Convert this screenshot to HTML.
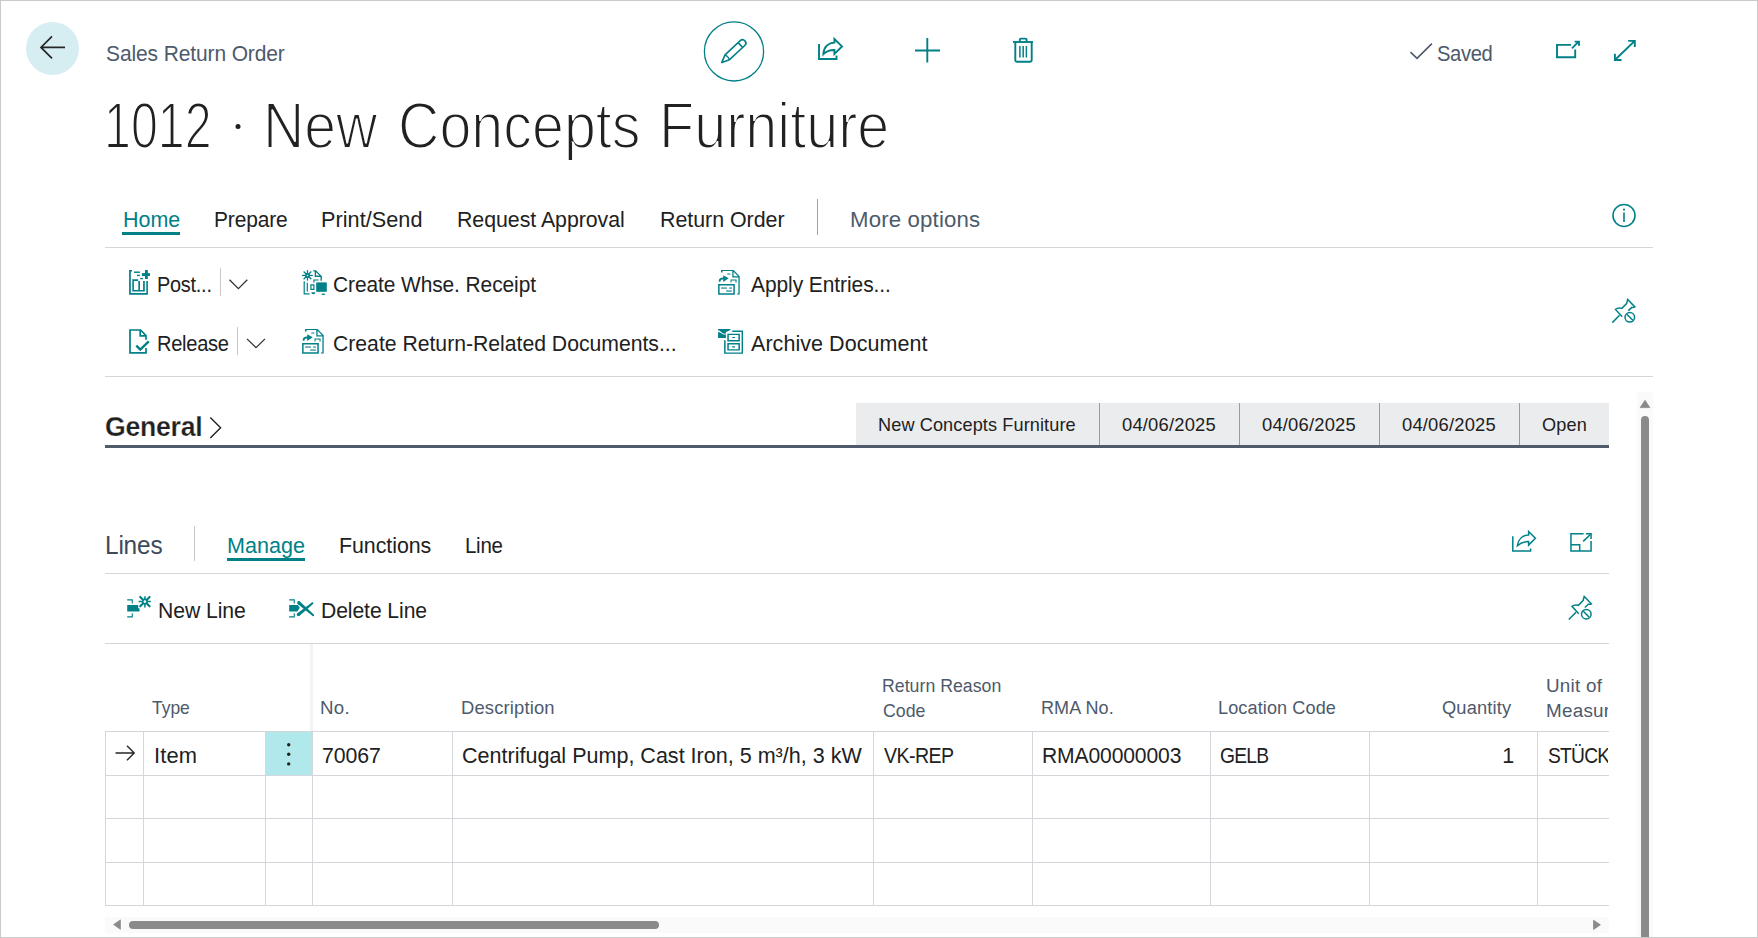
<!DOCTYPE html>
<html><head><meta charset="utf-8"><title>Sales Return Order</title>
<style>
html,body{margin:0;padding:0;background:#fff;}
body{width:1758px;height:938px;overflow:hidden;position:relative;font-family:"Liberation Sans",sans-serif;}
.t{position:absolute;white-space:nowrap;line-height:1;font-family:"Liberation Sans",sans-serif;transform-origin:0 0;}
.clip{position:absolute;overflow:hidden;}
.light{-webkit-text-stroke:1.9px #fff;}
.semi{-webkit-text-stroke:0.25px #fff;}
svg{position:absolute;left:0;top:0;}
</style></head><body>
<svg width="1758" height="938" viewBox="0 0 1758 938">
<!-- back button -->
<circle cx="52.5" cy="48.5" r="26.5" fill="#d6eef1"/>
<g fill="none" stroke="#262626" stroke-width="1.7" stroke-linecap="butt" stroke-linejoin="miter">
<path d="M41,47.4 H65 M52,36.4 L41,47.4 L52,58.4"/>
</g>
<circle cx="238" cy="126.6" r="2.5" fill="#212121"/>
<!-- edit circle -->
<circle cx="734" cy="51.4" r="29.6" fill="none" stroke="#008087" stroke-width="1.3"/>
<g fill="none" stroke="#008087" stroke-width="1.6" stroke-linejoin="round">
<g transform="translate(721.8,62.4) rotate(-43)">
<path d="M0,0 L7.5,-3.3 H28.3 A3.3,3.3 0 0 1 28.3,3.3 H7.5 Z"/>
<path d="M7.5,-3.3 Q9,0 7.5,3.3"/>
<path d="M25.5,-3.3 V3.3"/>
</g>
</g>
<!-- top share -->
<g fill="none" stroke="#008087" stroke-width="1.9" stroke-linejoin="miter">
<path d="M819,44 V59 H836.5 V55.6"/>
<path d="M834.4,39 L842,46.4 L834.4,53.9 V50 C829.5,49.8 826,51.5 823.4,54.2 C823.6,47.3 828,42.9 834.4,42.6 Z"/>
</g>
<!-- plus -->
<path d="M915,50.5 H940 M927.3,38 V62.6" stroke="#008087" stroke-width="1.9" fill="none"/>
<!-- trash -->
<g fill="none" stroke="#008087" stroke-width="1.9">
<path d="M1013,42 H1033"/>
<path d="M1019.8,42 V39.8 Q1019.8,38.6 1021,38.6 H1025.4 Q1026.6,38.6 1026.6,39.8 V42"/>
<path d="M1015.3,42 V60.3 Q1015.3,61.8 1016.8,61.8 H1030.2 Q1031.7,61.8 1031.7,60.3 V42"/>
<path d="M1019.9,46 V57.6 M1023.2,46 V57.6 M1026.4,46 V57.6" stroke-width="1.5"/>
</g>
<!-- saved check -->
<path d="M1410.5,52.2 L1417,58.4 L1431.9,43.6" fill="none" stroke="#4d5a6b" stroke-width="1.6"/>
<!-- open in new window -->
<g fill="none" stroke="#008087" stroke-width="1.9">
<path d="M1571,44.9 H1557 V57.3 H1575.2 V49.6"/>
<path d="M1572,48.3 L1578.6,41.7 M1574.6,41.6 H1579 V45.8"/>
</g>
<!-- expand -->
<g fill="none" stroke="#008087" stroke-width="1.9">
<path d="M1614.9,60 L1635,40.6 M1614.9,53.8 V60 H1621.5 M1628.2,40.9 H1634.8 V47"/>
</g>
<!-- tabs underline / separators / lines -->
<rect x="122" y="232" width="58" height="3" fill="#008087"/>
<rect x="817" y="199" width="1" height="36" fill="#9aa3ae"/>
<rect x="105" y="247" width="1548" height="1" fill="#d3d6db"/>
<!-- info -->
<circle cx="1624" cy="215.5" r="11" fill="none" stroke="#008087" stroke-width="1.6"/>
<circle cx="1624" cy="209.6" r="1.05" fill="#008087"/>
<path d="M1624,212.6 V222" stroke="#008087" stroke-width="1.6"/>
<!-- action separators & chevrons -->
<rect x="220" y="268" width="1" height="28" fill="#c8c8c8"/>
<rect x="237" y="327" width="1" height="28" fill="#c8c8c8"/>
<path d="M229.5,279.8 L238.4,288.6 L247.3,279.8 M247,338.9 L256,347.7 L265,338.9" fill="none" stroke="#333" stroke-width="1.3"/>
<rect x="105" y="376" width="1548" height="1" fill="#d3d6db"/>

<!-- POST icon origin 126,266 -->
<g transform="translate(126,266)" fill="#008087">
<path d="M3.1,4 H6 V5.6 H4.8 V27 H20.3 V15 H21.9 V28.7 H3.1 Z"/>
<path d="M6.3,13.3 H12.2 V15 H7.9 V24 H12.3 V15 H14 V24 H17.1 V15 H18.8 V25.6 H6.3 Z"/>
<rect x="8" y="5.5" width="5.9" height="1.4"/>
<rect x="11" y="8.7" width="2.9" height="1.4"/>
<rect x="14.3" y="11.9" width="2.6" height="1.4"/>
<rect x="19" y="4" width="2.8" height="9"/>
<rect x="15.9" y="7.1" width="8.1" height="2.9"/>
</g>
<!-- RELEASE icon origin 126,326 -->
<g transform="translate(126,326)" fill="none" stroke="#008087" stroke-width="1.7">
<path d="M20,13.8 V9.6 L14.6,4 H4 V26.9 H20 V22"/>
<path d="M14.2,4 V9.8 H20"/>
<path d="M10.3,19.6 L14.3,23.6 L22.8,15.4" stroke-width="2.4"/>
</g>
<!-- CREATE WHSE icon origin 299,266 -->
<g transform="translate(299,266)" fill="#008087">
<rect x="3" y="8.8" width="10.8" height="1.3"/>
<rect x="7.8" y="4.1" width="1.3" height="10.6"/>
<path d="M4.6,5.5 L12.3,13.2 M12.3,5.5 L4.6,13.2" stroke="#008087" stroke-width="1.3"/>
<rect x="6.3" y="7.3" width="4.5" height="4.5"/>
<circle cx="8.5" cy="9.5" r="0.8" fill="#fff"/>
<path d="M14.2,4.2 H17 L22.9,10.2 V14.7 H21.5 V11 H15.7 V5.6 H14.2 Z M17,6.2 V9.6 H20.6 Z" fill-rule="evenodd"/>
<path d="M14.3,13.5 H19.6 V14.6 H15.5 V16.4 H14.3 Z"/>
<path d="M4.6,15.2 H5.8 V27.3 H10.6 V28.5 H4.6 Z"/>
<rect x="7.7" y="16.7" width="1.2" height="8.9"/>
<path d="M11.3,18.3 H15.5 V24 H11.3 Z M12.5,19.5 V22.8 H14.3 V19.5 Z" fill-rule="evenodd"/>
<rect x="17.2" y="16.4" width="10.6" height="9.4"/>
<path d="M12.3,26.2 H16.3 A2,2 0 0 1 12.3,26.2 Z"/>
<ellipse cx="24.4" cy="28.2" rx="2" ry="0.8"/>
</g>
<!-- CREATE RETURN icon origin 299,326 (doc icon) -->
<g transform="translate(299,326)" fill="#008087" id="docicon">
<path d="M6,3.1 H18.6 L24.7,9.2 V27.6 H22 V26.6 H23.4 V10.4 H17.3 V4.1 H7.5 V5.5 H6 Z M18.6,4.8 V9.2 H23 Z" fill-rule="evenodd"/>
<rect x="12.1" y="6.5" width="3.4" height="1.1" rx="0.5"/>
<path d="M3.7,14.8 C3.7,12 5,10.6 8.2,10.6 V8.2 L13.7,11.3 L8.2,15 V12.6 C6.3,12.6 5.4,13.2 5.4,14.8 Z"/>
<path d="M15.5,12.5 H21.6 V15.4 H20.5 V13.6 H16.5 V15.4 H15.5 Z"/>
<path d="M3.1,17.1 H19.8 V27.8 H3.1 Z M4.6,18.6 V26.3 H18.3 V18.6 Z" fill-rule="evenodd"/>
<rect x="6.1" y="20.5" width="5.8" height="1.1"/>
<rect x="14.2" y="20.5" width="2.7" height="1.1"/>
<rect x="11.1" y="23.5" width="5.8" height="1.1"/>
</g>
<!-- APPLY ENTRIES icon origin 715,267 -->
<g transform="translate(715,267)" fill="#008087">
<path d="M6,3.1 H18.6 L24.7,9.2 V27.6 H22 V26.6 H23.4 V10.4 H17.3 V4.1 H7.5 V5.5 H6 Z M18.6,4.8 V9.2 H23 Z" fill-rule="evenodd"/>
<rect x="12.1" y="6.5" width="3.4" height="1.1" rx="0.5"/>
<path d="M3.7,14.8 C3.7,12 5,10.6 8.2,10.6 V8.2 L13.7,11.3 L8.2,15 V12.6 C6.3,12.6 5.4,13.2 5.4,14.8 Z"/>
<path d="M15.5,12.5 H21.6 V15.4 H20.5 V13.6 H16.5 V15.4 H15.5 Z"/>
<path d="M3.1,17.1 H19.8 V27.8 H3.1 Z M4.6,18.6 V26.3 H18.3 V18.6 Z" fill-rule="evenodd"/>
<rect x="6.1" y="20.5" width="5.8" height="1.1"/>
<rect x="14.2" y="20.5" width="2.7" height="1.1"/>
<rect x="11.1" y="23.5" width="5.8" height="1.1"/>
</g>
<!-- ARCHIVE icon origin 714,326 -->
<g transform="translate(714,326)" fill="#008087">
<path d="M4.1,2.9 H16.7 L16.2,4.1 L13,5.8 H11.9 V12.1 H4.1 V6.1 L5.5,6.3 L9.5,8.6 H11.9 V7.2 L9.2,7.6 L5.2,4.6 H4.1 Z"/>
<path d="M18.3,4.6 H29 V27.8 H10.1 V14.3 H11.6 V26.5 H27.6 V5.9 H18.3 Z"/>
<path d="M13.3,7.8 H25.9 V15.4 H13.3 Z M14.8,9.1 V14.1 H24.4 V9.1 Z" fill-rule="evenodd"/>
<path d="M13.3,17.1 H25.9 V24.6 H13.3 Z M14.8,18.4 V23.3 H24.4 V18.4 Z" fill-rule="evenodd"/>
<rect x="18.1" y="10.9" width="3" height="1.1" rx="0.5"/>
<rect x="18.1" y="20.3" width="3" height="1.1" rx="0.5"/>
</g>
<!-- top pin origin 1607.5,295.1 -->
<g transform="translate(1607.5,295.1)" fill="none" stroke="#008087" stroke-width="1.5">
<path d="M4.8,27.5 L12,20.2"/>
<path d="M14.7,21.7 L8,14.3 C9.8,12.8 12,12.6 14.3,13.3 L19.1,8.5 L20.2,4.4 L27.4,11.8 C26.2,12.6 25.2,12.4 24.4,12.3 L20.8,15.5"/>
<circle cx="22.3" cy="22.2" r="4.8"/>
<path d="M19.3,19.2 L25.3,25.2"/>
</g>
<!-- General -->
<rect x="856" y="403" width="753" height="42" fill="#ebecee"/>
<rect x="1099" y="403" width="1" height="42" fill="#9b9b9b"/>
<rect x="1239" y="403" width="1" height="42" fill="#9b9b9b"/>
<rect x="1379" y="403" width="1" height="42" fill="#9b9b9b"/>
<rect x="1519" y="403" width="1" height="42" fill="#9b9b9b"/>
<rect x="105" y="445" width="1504" height="3" fill="#4f5b6b"/>
<path d="M210.3,417.5 L220.6,427.7 L210.3,437.9" fill="none" stroke="#212121" stroke-width="1.4"/>
<!-- v scrollbar -->
<rect x="1637" y="392" width="16" height="545" fill="#fafafa"/>
<path d="M1645,400.3 L1649.8,407.6 H1640.2 Z" fill="#8a8a8a" stroke="#8a8a8a" stroke-width="0.8" stroke-linejoin="round"/>
<rect x="1641" y="416" width="8" height="530" rx="4" fill="#8a8a8a"/>
<!-- Lines header -->
<rect x="194" y="526" width="1" height="35" fill="#c8c8c8"/>
<rect x="227" y="558" width="78" height="3" fill="#008087"/>
<rect x="105" y="573" width="1504" height="1" fill="#d3d6db"/>
<!-- lines share -->
<g fill="none" stroke="#008087" stroke-width="1.5">
<path d="M1512.8,536.2 V551 H1530.6 V548.5"/>
<path d="M1528.6,531.5 L1535.4,538.3 L1528.6,545.1 V541.6 C1523.5,541.4 1520.3,543 1517.4,545.6 C1518.2,539.3 1522.5,535.3 1528.6,535 Z"/>
</g>
<!-- lines expand -->
<g fill="none" stroke="#008087" stroke-width="1.5" transform="translate(1564,528)">
<path d="M19.6,5.85 H6.95 V22.95 H27.05 V13"/>
<path d="M21.8,5.85 H27.05 V11"/>
<path d="M19.2,13.4 L26.6,6.3"/>
<path d="M6.95,16.85 H15.7 V22.95"/>
</g>
<!-- new line icon origin 124,592 -->
<g transform="translate(124,592)" fill="#008087">
<path d="M3.2,7.2 H8.8 V11.5 H7.7 V8.6 H3.2 Z"/>
<path d="M3.2,13.1 H14.2 V16.3 H15.5 V19.5 H3.2 Z"/>
<path d="M7.7,21.3 H8.8 V25.6 H3.2 V24.2 H7.7 Z"/>
<g stroke="#008087" stroke-width="1.5" fill="none">
<path d="M14.6,9.6 H26.8 M20.9,4.2 V15.6"/>
<path d="M16.2,4.9 L25.6,14.3 M25.6,4.9 L16.2,14.3" stroke-width="2.1" stroke-linecap="round"/>
</g>
<circle cx="20.9" cy="9.6" r="3" fill="#008087"/>
<circle cx="20.9" cy="9.6" r="1.3" fill="#fff"/>
</g>
<!-- delete line icon origin 286,592 -->
<g transform="translate(286,592)" fill="#008087">
<path d="M3.2,7.2 H8.8 V11.5 H7.7 V8.6 H3.2 Z"/>
<path d="M3.2,13.1 H11.8 L13.8,15.8 L11.3,19.5 H3.2 Z"/>
<path d="M7.7,21.3 H8.8 V25.6 H3.2 V24.2 H7.7 Z"/>
<path d="M11.68,11.98 L26.61,23.98 L27.79,22.62 L13.92,9.42 Z"/><circle cx="12.8" cy="10.7" r="1.7"/><circle cx="27.2" cy="23.3" r="0.9"/>
<path d="M13.57,23.82 L27.07,11.9 L25.93,10.5 L11.43,21.18 Z"/><circle cx="12.5" cy="22.5" r="1.7"/><circle cx="26.5" cy="11.2" r="0.9"/>
</g>
<!-- lines pin origin 1564,592 -->
<g transform="translate(1564,592)" fill="none" stroke="#008087" stroke-width="1.5">
<path d="M4.8,27.5 L12,20.2"/>
<path d="M14.7,21.7 L8,14.3 C9.8,12.8 12,12.6 14.3,13.3 L19.1,8.5 L20.2,4.4 L27.4,11.8 C26.2,12.6 25.2,12.4 24.4,12.3 L20.8,15.5"/>
<circle cx="22.3" cy="22.2" r="4.8"/>
<path d="M19.3,19.2 L25.3,25.2"/>
</g>
<rect x="105" y="643" width="1504" height="1" fill="#d3d6db"/>
<!-- grid -->
<rect x="310" y="644" width="3" height="88" fill="#f3f3f3"/>
<rect x="266" y="732" width="46" height="43" fill="#b1e8eb"/>
<g fill="#d3d6db">
<rect x="105" y="731" width="1504" height="1"/>
<rect x="105" y="775" width="1504" height="1"/>
<rect x="105" y="818" width="1504" height="1"/>
<rect x="105" y="862" width="1504" height="1"/>
<rect x="105" y="905" width="1504" height="1"/>
<rect x="105" y="731" width="1" height="175"/>
<rect x="143" y="731" width="1" height="175"/>
<rect x="265" y="731" width="1" height="175"/>
<rect x="312" y="731" width="1" height="175"/>
<rect x="452" y="731" width="1" height="175"/>
<rect x="873" y="731" width="1" height="175"/>
<rect x="1032" y="731" width="1" height="175"/>
<rect x="1210" y="731" width="1" height="175"/>
<rect x="1369" y="731" width="1" height="175"/>
<rect x="1537" y="731" width="1" height="175"/>
</g>
<!-- row arrow -->
<path d="M115.5,753 H134 M127,745.8 L134.2,753 L127,760.2" fill="none" stroke="#262626" stroke-width="1.4"/>
<!-- dots -->
<circle cx="288.7" cy="744.8" r="1.7" fill="#212121"/>
<circle cx="288.7" cy="754.3" r="1.7" fill="#212121"/>
<circle cx="288.7" cy="763.9" r="1.7" fill="#212121"/>
<!-- h scrollbar -->
<rect x="105" y="917" width="1504" height="16" fill="#fafafa"/>
<path d="M113.6,924.6 L120.4,919.9 V929.3 Z" fill="#8a8a8a" stroke="#8a8a8a" stroke-width="0.8" stroke-linejoin="round"/>
<rect x="129" y="921" width="530" height="8" rx="4" fill="#8a8a8a"/>
<path d="M1600.4,924.85 L1593.5,920.2 V929.5 Z" fill="#8a8a8a" stroke="#8a8a8a" stroke-width="0.8" stroke-linejoin="round"/>
<rect x="0.5" y="0.5" width="1757" height="937" fill="none" stroke="#c9cbcb" stroke-width="1"/>
</svg>

<div class="t" style="left:106.30px;top:44.47px;font-size:21.53px;letter-spacing:-0.116px;color:#4d5a6b;transform:scaleX(0.9753);">Sales Return Order</div>
<div class="t" style="left:1437.30px;top:44.47px;font-size:21.53px;letter-spacing:-0.398px;color:#4d5a6b;transform:scaleX(0.9393);">Saved</div>
<div class="t light" style="left:104.40px;top:94.40px;font-size:64.5px;letter-spacing:0.000px;color:#212121;transform:scaleX(0.7495);">1012</div>
<div class="t light" style="left:262.67px;top:94.40px;font-size:64.5px;letter-spacing:0.000px;color:#212121;transform:scaleX(0.8863);">New</div>
<div class="t light" style="left:397.53px;top:94.40px;font-size:64.5px;letter-spacing:0.000px;color:#212121;transform:scaleX(0.8898);">Concepts</div>
<div class="t light" style="left:659.24px;top:94.40px;font-size:64.5px;letter-spacing:0.000px;color:#212121;transform:scaleX(0.8924);">Furniture</div>
<div class="t" style="left:122.50px;top:210.47px;font-size:21.53px;letter-spacing:-0.013px;color:#008087;transform:scaleX(0.9984);">Home</div>
<div class="t" style="left:213.83px;top:210.47px;font-size:21.53px;letter-spacing:-0.146px;color:#212121;transform:scaleX(0.9732);">Prepare</div>
<div class="t" style="left:321.09px;top:210.47px;font-size:21.53px;letter-spacing:0.033px;color:#212121;transform:scaleX(1.0071);">Print/Send</div>
<div class="t" style="left:456.51px;top:210.47px;font-size:21.53px;letter-spacing:-0.041px;color:#212121;transform:scaleX(0.9915);">Request Approval</div>
<div class="t" style="left:659.81px;top:210.47px;font-size:21.53px;letter-spacing:-0.027px;color:#212121;transform:scaleX(0.9944);">Return Order</div>
<div class="t" style="left:850.37px;top:210.47px;font-size:21.53px;letter-spacing:0.152px;color:#4d5a6b;transform:scaleX(1.0322);">More options</div>
<div class="t" style="left:157.46px;top:274.86px;font-size:21.25px;letter-spacing:-0.265px;color:#212121;transform:scaleX(0.9365);">Post...</div>
<div class="t" style="left:157.45px;top:333.71px;font-size:21.25px;letter-spacing:-0.301px;color:#212121;transform:scaleX(0.9456);">Release</div>
<div class="t" style="left:332.92px;top:274.86px;font-size:21.25px;letter-spacing:-0.077px;color:#212121;transform:scaleX(0.9835);">Create Whse. Receipt</div>
<div class="t" style="left:332.90px;top:333.71px;font-size:21.25px;letter-spacing:-0.012px;color:#212121;transform:scaleX(0.9974);">Create Return-Related Documents...</div>
<div class="t" style="left:750.60px;top:274.86px;font-size:21.25px;letter-spacing:-0.061px;color:#212121;transform:scaleX(0.9850);">Apply Entries...</div>
<div class="t" style="left:750.60px;top:333.71px;font-size:21.25px;letter-spacing:0.058px;color:#212121;transform:scaleX(1.0116);">Archive Document</div>
<div class="t semi" style="left:105.44px;top:413.44px;font-size:27.6px;letter-spacing:-0.254px;color:#212121;transform:scaleX(0.9648);font-weight:700;">General</div>
<div class="t" style="left:877.97px;top:417.05px;font-size:17.66px;letter-spacing:0.102px;color:#212121;transform:scaleX(1.0266);">New Concepts Furniture</div>
<div class="t" style="left:1122.10px;top:417.05px;font-size:17.66px;letter-spacing:0.175px;color:#212121;transform:scaleX(1.0419);">04/06/2025</div>
<div class="t" style="left:1262.10px;top:417.05px;font-size:17.66px;letter-spacing:0.175px;color:#212121;transform:scaleX(1.0419);">04/06/2025</div>
<div class="t" style="left:1402.10px;top:417.05px;font-size:17.66px;letter-spacing:0.175px;color:#212121;transform:scaleX(1.0419);">04/06/2025</div>
<div class="t" style="left:1542.20px;top:417.05px;font-size:17.66px;letter-spacing:0.161px;color:#212121;transform:scaleX(1.0267);">Open</div>
<div class="t" style="left:104.96px;top:532.54px;font-size:25.12px;letter-spacing:-0.181px;color:#3d4a5c;transform:scaleX(0.9709);">Lines</div>
<div class="t" style="left:227.30px;top:535.97px;font-size:21.53px;letter-spacing:0.013px;color:#008087;transform:scaleX(1.0019);">Manage</div>
<div class="t" style="left:338.91px;top:535.97px;font-size:21.53px;letter-spacing:-0.038px;color:#212121;transform:scaleX(0.9922);">Functions</div>
<div class="t" style="left:465.25px;top:535.97px;font-size:21.53px;letter-spacing:-0.278px;color:#212121;transform:scaleX(0.9517);">Line</div>
<div class="t" style="left:158.42px;top:600.67px;font-size:21.53px;letter-spacing:-0.083px;color:#212121;transform:scaleX(0.9847);">New Line</div>
<div class="t" style="left:320.92px;top:600.57px;font-size:21.53px;letter-spacing:-0.084px;color:#212121;transform:scaleX(0.9819);">Delete Line</div>
<div class="t" style="left:152.20px;top:699.95px;font-size:17.66px;letter-spacing:-0.046px;color:#4d5a6b;transform:scaleX(0.9916);">Type</div>
<div class="t" style="left:320.34px;top:699.95px;font-size:17.66px;letter-spacing:0.311px;color:#4d5a6b;transform:scaleX(1.0576);">No.</div>
<div class="t" style="left:461.16px;top:699.95px;font-size:17.66px;letter-spacing:0.153px;color:#4d5a6b;transform:scaleX(1.0417);">Description</div>
<div class="t" style="left:881.90px;top:678.05px;font-size:17.66px;letter-spacing:0.014px;color:#4d5a6b;transform:scaleX(1.0034);">Return Reason</div>
<div class="t" style="left:882.90px;top:702.65px;font-size:17.66px;letter-spacing:0.014px;color:#4d5a6b;transform:scaleX(1.0034);">Code</div>
<div class="t" style="left:1041.18px;top:699.85px;font-size:17.66px;letter-spacing:0.098px;color:#4d5a6b;transform:scaleX(1.0199);">RMA No.</div>
<div class="t" style="left:1218.28px;top:699.95px;font-size:17.66px;letter-spacing:0.100px;color:#4d5a6b;transform:scaleX(1.0249);">Location Code</div>
<div class="t" style="left:1441.50px;top:699.95px;font-size:17.66px;letter-spacing:0.142px;color:#4d5a6b;transform:scaleX(1.0356);">Quantity</div>
<div class="clip" style="left:1545.53px;top:668.05px;width:62.47px;height:37.66px;"><div class="t" style="left:0;top:10px;font-size:17.66px;letter-spacing:0.236px;color:#4d5a6b;transform:scaleX(1.0671);">Unit of</div></div>
<div class="clip" style="left:1545.53px;top:692.65px;width:62.47px;height:37.66px;"><div class="t" style="left:0;top:10px;font-size:17.66px;letter-spacing:0.236px;color:#4d5a6b;transform:scaleX(1.0671);">Measure</div></div>
<div class="t" style="left:154.18px;top:745.67px;font-size:21.53px;letter-spacing:0.107px;color:#212121;transform:scaleX(1.0188);">Item</div>
<div class="t" style="left:321.81px;top:745.67px;font-size:21.53px;letter-spacing:-0.073px;color:#212121;transform:scaleX(0.9883);">70067</div>
<div class="t" style="left:462.00px;top:745.67px;font-size:21.53px;letter-spacing:0.003px;color:#212121;transform:scaleX(1.0006);">Centrifugal Pump, Cast Iron, 5 m³/h, 3 kW</div>
<div class="t" style="left:883.90px;top:745.67px;font-size:21.53px;letter-spacing:-0.632px;color:#212121;transform:scaleX(0.9100);">VK-REP</div>
<div class="t" style="left:1042.22px;top:745.67px;font-size:21.53px;letter-spacing:-0.126px;color:#212121;transform:scaleX(0.9794);">RMA00000003</div>
<div class="t" style="left:1219.61px;top:745.67px;font-size:21.53px;letter-spacing:-0.872px;color:#212121;transform:scaleX(0.8945);">GELB</div>
<div class="t" style="left:1502.20px;top:745.67px;font-size:21.53px;letter-spacing:0.000px;color:#212121;">1</div>
<div class="clip" style="left:1547.80px;top:735.67px;width:60.20px;height:41.53px;"><div class="t" style="left:0;top:10px;font-size:21.53px;letter-spacing:-0.872px;color:#212121;transform:scaleX(0.8945);">STÜCK</div></div>
</body></html>
